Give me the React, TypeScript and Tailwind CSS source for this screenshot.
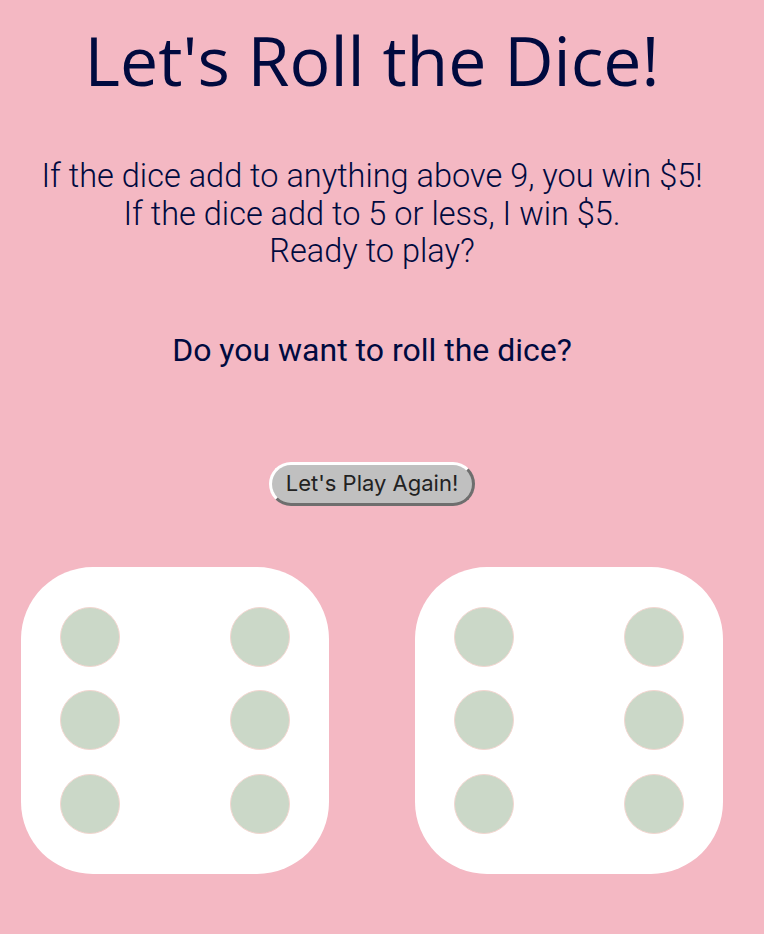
import React from "react";

function Pip() {
  return (
    <div className="w-[60px] h-[60px] rounded-full bg-[#cbd8c8] border border-[#f3d6d0]" />
  );
}

function Die() {
  return (
    <div className="w-[308px] h-[307px] bg-white rounded-[72px] px-[39px] py-[40px] flex flex-col justify-between">
      {[0, 1, 2].map((r) => (
        <div key={r} className="flex justify-between">
          <Pip />
          <Pip />
        </div>
      ))}
    </div>
  );
}

export default function App() {
  return (
    <div className="min-h-[934px] bg-[#f4b8c3] text-[#000a3f] pt-[20px]">
      <div className="w-[744px]">
        <h1
          className="text-center text-[68px] leading-[80px] font-medium"
          style={{ fontFamily: '"Open Sans", "DejaVu Sans", sans-serif' }}
        >
          Let's Roll the Dice!
        </h1>

        <p
          className="mt-[58px] text-center text-[32.5px] leading-[37.5px] font-light"
          style={{ fontFamily: "Roboto, sans-serif" }}
        >
          If the dice add to anything above 9, you win $5!
          <br />
          If the dice add to 5 or less, I win $5.
          <br />
          Ready to play?
        </p>

        <p
          className="mt-[60px] text-center text-[32px] leading-[38px] font-normal"
          style={{ fontFamily: "Roboto, sans-serif" }}
        >
          Do you want to roll the dice?
        </p>

        <div className="mt-[93px] flex justify-center">
          <button
            className="h-[44px] px-[14px] rounded-full bg-[#c0c0c0] border-[3px] border-t-white border-l-white border-b-[#6e6e6e] border-r-[#6e6e6e] text-[22px] text-[#222]"
            style={{ fontFamily: "Inter, sans-serif" }}
          >
            Let's Play Again!
          </button>
        </div>

        <div className="mt-[61px] flex pl-[21px] gap-[86px]">
          <Die />
          <Die />
        </div>
      </div>
    </div>
  );
}
